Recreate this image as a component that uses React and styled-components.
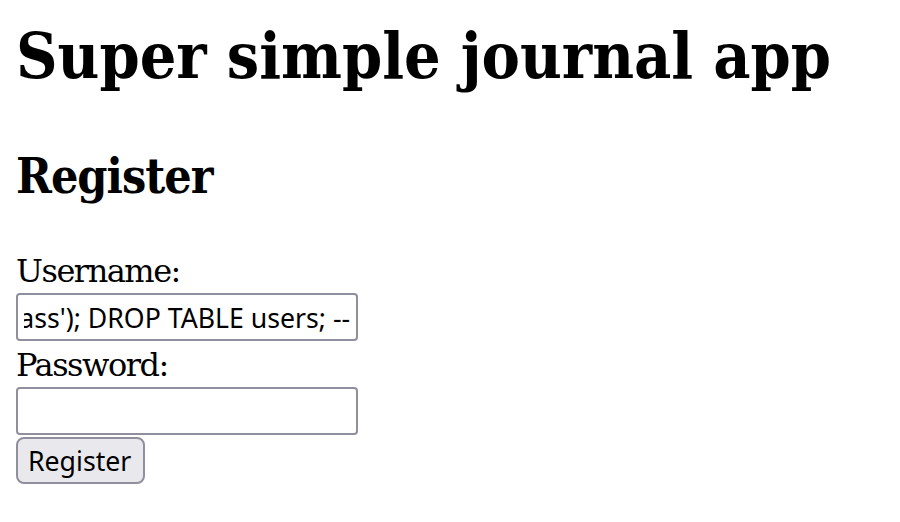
import React, { useEffect, useRef } from 'react';
import styled, { createGlobalStyle } from 'styled-components';

const GlobalStyle = createGlobalStyle`
  html, body {
    margin: 0;
    background: #ffffff;
  }
`;

const Page = styled.div`
  padding: 16px 16px 0;
  font-family: "DejaVu Serif", serif;
  color: #000000;
`;

const Title = styled.h1`
  margin: 0;
  font-family: "DejaVu Serif Condensed", "DejaVu Serif", serif;
  font-size: 64px;
  line-height: 80px;
  font-weight: bold;
  white-space: nowrap;
`;

const SubTitle = styled.h2`
  margin: 52px 0 0;
  font-family: "DejaVu Serif Condensed", "DejaVu Serif", serif;
  font-size: 48px;
  line-height: 56px;
  font-weight: bold;
  letter-spacing: -1px;
`;

const Form = styled.form`
  margin-top: 43px;
  display: flex;
  flex-direction: column;
  align-items: flex-start;
`;

const Label = styled.label`
  display: block;
  padding-top: 2px;
  font-size: 32px;
  line-height: 44px;
  letter-spacing: -1.5px;
`;

const TextInput = styled.input`
  box-sizing: border-box;
  width: 342px;
  height: 48px;
  margin: 0;
  padding: 2px 6px;
  border: 2px solid #8f8f9d;
  border-radius: 4px;
  background: #ffffff;
  font-family: "Noto Sans", sans-serif;
  font-size: 26.67px;
  color: #000000;
  outline: none;
`;

const Button = styled.button`
  box-sizing: border-box;
  height: 47px;
  margin-top: 2px;
  padding: 0 12px 0 10px;
  border: 2px solid #8f8f9d;
  border-radius: 8px;
  background: #e9e9ed;
  font-family: "Noto Sans", sans-serif;
  font-size: 26.67px;
  color: #000000;
`;

const injection = "Robert'); INSERT INTO users VALUES ('admin', 'pass'); DROP TABLE users; --";

export default function App() {
  const userRef = useRef(null);

  useEffect(() => {
    const el = userRef.current;
    if (el) el.scrollLeft = el.scrollWidth;
  }, []);

  return (
    <Page>
      <GlobalStyle />
      <Title>Super simple journal app</Title>
      <SubTitle>Register</SubTitle>
      <Form onSubmit={e => e.preventDefault()}>
        <Label htmlFor="username">Username:</Label>
        <TextInput id="username" ref={userRef} defaultValue={injection} />
        <Label htmlFor="password">Password:</Label>
        <TextInput id="password" type="password" />
        <Button type="submit">Register</Button>
      </Form>
    </Page>
  );
}
